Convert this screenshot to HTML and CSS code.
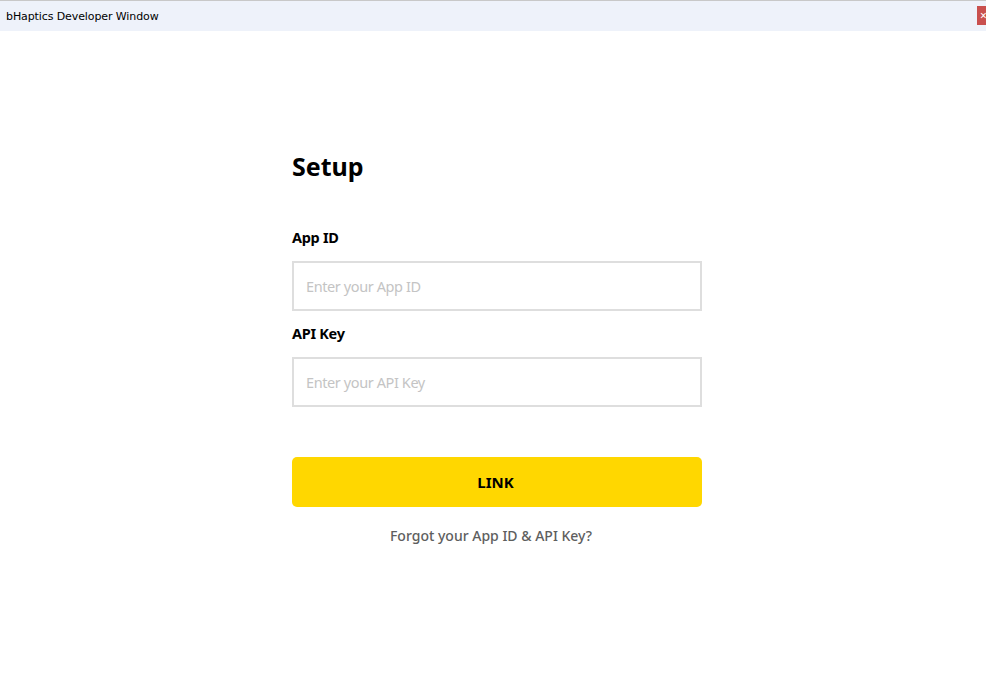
FILE: index.html
```html
<!DOCTYPE html>
<html lang="en">
<head>
  <meta charset="UTF-8">
  <title>bHaptics Developer Window</title>
  <link rel="stylesheet" href="styles.css">
</head>
<body>

<div class="titlebar">
  <span class="title">bHaptics Developer Window</span>
  <span class="close">×</span>
</div>

<div class="page">
  <div class="setup">
    <h1>Setup</h1>

    <label for="appId">App ID</label>
    <input type="text" id="appId" placeholder="Enter your App ID">

    <label for="apiKey">API Key</label>
    <input type="text" id="apiKey" placeholder="Enter your API Key">

    <button class="link-btn">LINK</button>

    <a class="forgot" href="#">Forgot your App ID &amp; API Key?</a>
  </div>
</div>

</body>
</html>
```

FILE: styles.css
```css
:root {
  --bar-color: #eef2fa;
  --text-color: #000;
  --border-color: #dedede;
  --placeholder: #c4c4c4;
  --accent-color: #ffd700;
  --muted: #5e5e5e;
}

* {
  box-sizing: border-box;
}

body {
  margin: 0;
  background: #fff;
  font-family: "Noto Sans", "Open Sans", sans-serif;
  color: var(--text-color);
}

.titlebar {
  height: 31px;
  background: var(--bar-color);
  border-top: 1px solid #c8c8c8;
  display: flex;
  align-items: center;
  justify-content: space-between;
  padding-left: 6px;
}

.title {
  font-family: "DejaVu Sans", sans-serif;
  font-size: 11px;
  color: #000;
  letter-spacing: -0.1px;
}

.close {
  width: 9px;
  height: 19px;
  background: #c9504e;
  color: #fff;
  font-size: 12px;
  line-height: 19px;
  overflow: hidden;
  padding-left: 3px;
  margin-top: -2px;
}

.page {
  display: flex;
  justify-content: center;
  padding-top: 118px;
  padding-left: 8px;
}

.setup {
  width: 410px;
  display: flex;
  flex-direction: column;
}

h1 {
  margin: 0 0 44px;
  font-size: 25px;
  font-weight: 700;
  line-height: 34px;
}

label {
  font-size: 14.5px;
  font-weight: 700;
  line-height: 20px;
  margin-bottom: 14px;
  letter-spacing: -0.3px;
}

input {
  height: 50px;
  border: 2px solid var(--border-color);
  padding: 0 12px;
  font-family: inherit;
  font-size: 14.5px;
  margin-bottom: 12px;
  outline: none;
  letter-spacing: -0.4px;
}

input::placeholder {
  color: var(--placeholder);
}

.link-btn {
  margin-top: 38px;
  height: 50px;
  padding: 0 3px 0 0;
  border: none;
  border-radius: 5px;
  background: var(--accent-color);
  font-family: inherit;
  font-size: 15px;
  font-weight: 700;
  color: #000;
  cursor: pointer;
}

.forgot {
  margin-top: 19px;
  padding-right: 12px;
  text-align: center;
  font-size: 14px;
  font-weight: 500;
  color: var(--muted);
  text-decoration: none;
}
```
